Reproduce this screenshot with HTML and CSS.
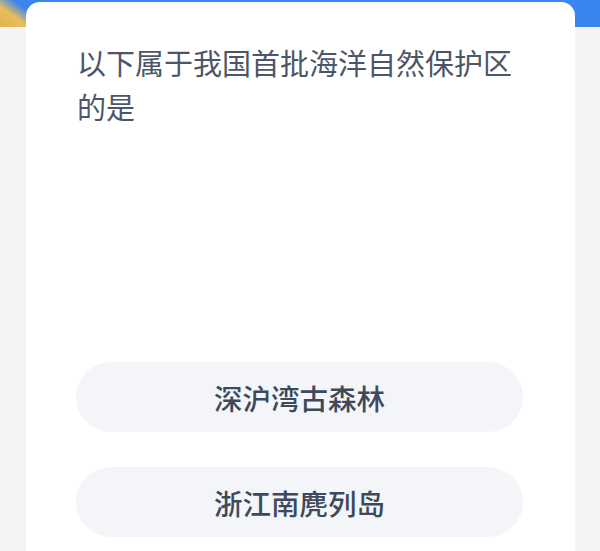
FILE: index.html
```html
<!DOCTYPE html>
<html lang="zh">
<head>
<meta charset="utf-8">
<link rel="stylesheet" href="styles.css">
</head>
<body>
<div class="page">
  <div class="card">
    <div class="question">以下属于我国首批海洋自然保护区的是</div>
    <div class="options">
      <div class="option">深沪湾古森林</div>
      <div class="option">浙江南麂列岛</div>
    </div>
  </div>
</div>
</body>
</html>
```
FILE: styles.css
```css
html, body {
  margin: 0;
  padding: 0;
  height: 100%;
  overflow: hidden;
}
body {
  font-family: "Noto Sans CJK SC", "Noto Sans", sans-serif;
  background: #f4f4f4;
}
.page {
  height: 551px;
  background:
    linear-gradient(35deg, #e2b24c 0%, #e8bd5c 45%, #3a86ee 80%) no-repeat 0 0 / 26px 27px,
    linear-gradient(to bottom, #3a86ee 0, #3a86ee 27px, #f4f4f4 27px);
  padding-top: 2px;
  box-sizing: border-box;
}
.card {
  margin: 0 25px 0 26px;
  height: 549px;
  background: #fff;
  border-radius: 14px 14px 0 0;
  padding: 38px 52px 0 50px;
  box-sizing: border-box;
}
.question {
  padding-left: 1px;
  font-size: 29px;
  line-height: 44px;
  color: #4c5668;
  height: 88px;
  padding-right: 8px;
}
.options {
  margin-top: 234px;
  display: flex;
  flex-direction: column;
  gap: 35px;
}
.option {
  height: 70px;
  border-radius: 35px;
  background: #f3f5f8;
  display: flex;
  align-items: center;
  justify-content: center;
  font-size: 28.5px;
  font-weight: 500;
  color: #3e4a5b;
}
```
